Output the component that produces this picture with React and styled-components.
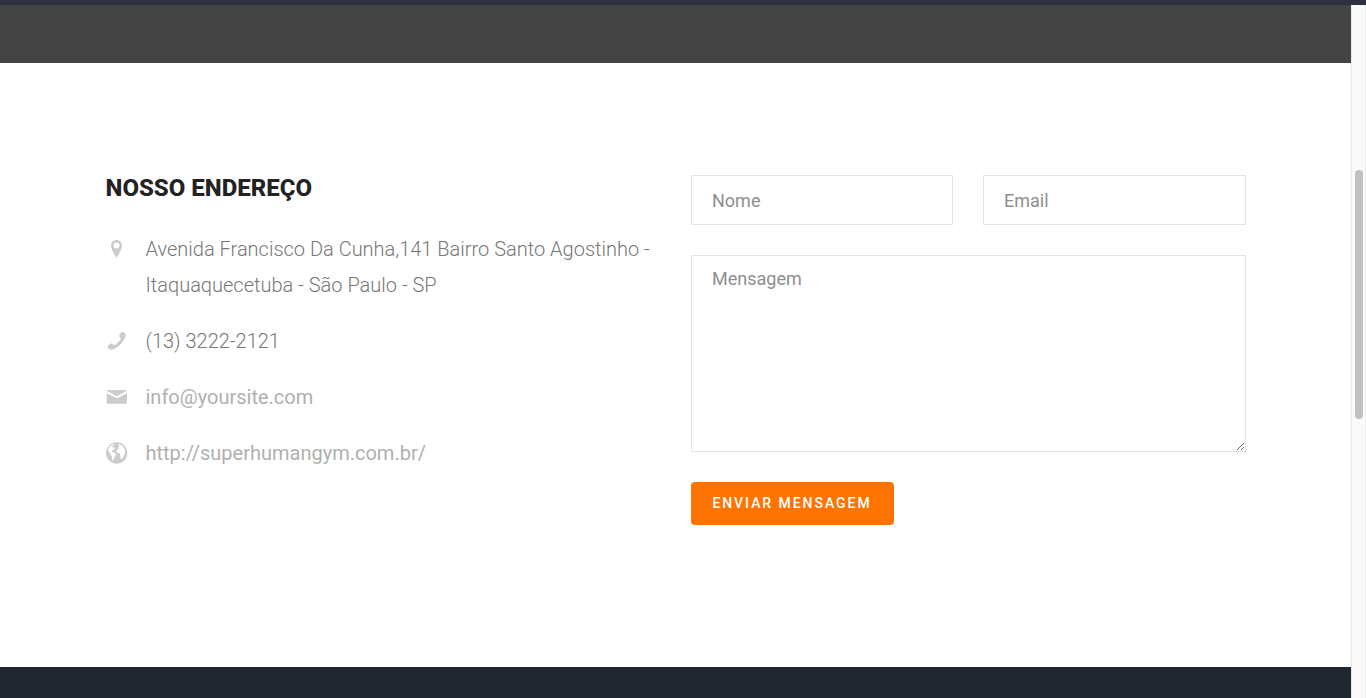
import React from "react";
import styled, { createGlobalStyle } from "styled-components";

const GlobalStyle = createGlobalStyle`
  * { box-sizing: border-box; }
  html, body { margin: 0; overflow: hidden; background: #fff; }
  body { font-family: Roboto, "Liberation Sans", sans-serif; -webkit-font-smoothing: antialiased; }
`;

const Page = styled.div`
  display: flex;
  flex-direction: column;
  height: 698px;
`;
const TopStrip = styled.div`
  flex: 0 0 5px;
  background: #2f3044;
`;
const Viewport = styled.div`
  flex: 1;
  min-height: 0;
  display: flex;
`;
const Content = styled.main`
  flex: 1;
  display: flex;
  flex-direction: column;
`;
const MapBand = styled.div`
  flex: 0 0 58px;
  background: #444;
`;
const Contact = styled.section`
  flex: 0 0 604px;
  display: grid;
  grid-template-columns: 555px 555px;
  column-gap: 30px;
  align-items: start;
  padding: 112px 0 0 106px;
`;
const Footer = styled.footer`
  flex: 1;
  background: #212731;
`;
const Track = styled.div`
  flex: 0 0 15px;
  padding: 165px 2px 0 3px;
  background: #fafafa;
  border-left: 1px solid #e8e8e8;
  border-right: 1px solid #ededed;
`;
const Thumb = styled.div`
  width: 8px;
  height: 249px;
  border-radius: 4px;
  background: #c1c1c1;
`;
const Title = styled.h2`
  margin: 0 0 30px -0.5px;
  padding-top: 1px;
  font-size: 24px;
  line-height: 25px;
  font-weight: 800;
  color: #222;
`;
const List = styled.ul`
  display: flex;
  flex-direction: column;
  gap: 20px;
  margin: 0;
  padding: 0;
  list-style: none;
`;
const Item = styled.li`
  display: grid;
  grid-template-columns: 22px 1fr;
  column-gap: 17.5px;
  font-size: 20px;
  line-height: 36px;
  font-weight: 300;
  color: #777;
`;
const Icon = styled.svg`
  width: 22px;
  height: 36px;
  fill: #ccc;
`;
const Link = styled.a`
  font-weight: 400;
  color: #b0b0b0;
  text-decoration: none;
`;
const Form = styled.form`
  display: grid;
  grid-template-columns: 262px 263px;
  gap: 30px;
  justify-items: start;
`;
const Input = styled.input`
  width: 100%;
  height: 50px;
  padding: 1px 20px 0;
  border: 1px solid #e5e5e5;
  border-radius: 0;
  outline: 0;
  font: 400 18px Roboto, sans-serif;
  &::placeholder { color: #8e8e8e; opacity: 1; }
`;
const Message = styled.textarea`
  grid-column: 1 / -1;
  display: block;
  width: 100%;
  height: 197px;
  padding: 12px 20px;
  border: 1px solid #e5e5e5;
  outline: 0;
  font: 400 18px Roboto, sans-serif;
  &::placeholder { color: #8e8e8e; opacity: 1; }
`;
const Button = styled.button`
  width: 203px;
  height: 43px;
  padding: 0 1px 1px 0;
  border: 0;
  border-radius: 4px;
  background: #ff7400;
  color: #fff;
  font: 500 14px Roboto, sans-serif;
  letter-spacing: 1.95px;
  white-space: nowrap;
`;

const Pin = () => (
  <Icon viewBox="0 0 22 36">
    <path fillRule="evenodd" d="M10.5 9C7.4 9 5 11.4 5 14.5c0 4.300 5.500 12.500 5.500 12.500S16 18.800 16 14.500C16 11.400 13.600 9 10.500 9zm0 8.500a3 3 0 1 1 0-6 3 3 0 0 1 0 6z" />
  </Icon>
);
const Phone = () => (
  <Icon viewBox="0 0 22 36">
    <path d="M14.200 20.200c-2 2-4.300 3.900-5.200 3-1.300-1.300-2.100-2.400-4.900-.1-2.800 2.200-.7 3.700.5 4.900 1.400 1.400 6.600.1 11.700-5.100 5.100-5.100 6.400-10.300 5-11.700-1.200-1.200-2.600-3.300-4.900-.5-2.200 2.800-1.100 3.600.1 4.900.9.900-.3 2.600-2.300 4.600z" transform="translate(-.8 .2) scale(.93)" />
  </Icon>
);
const Mail = () => (
  <Icon viewBox="0 0 22 36">
    <path d="M1.600 12.300l8.100 4.500c.5.300.8.300 1.100.3s.6 0 1.100-.3l8.100-4.500c.6-.4 1.100-1.300.2-1.300H1.400c-.9 0-.4.900.2 1.300zM20.300 14.400l-8.300 4.300c-.4.200-.8.300-1.200.3s-.8-.1-1.200-.3l-8.300-4.300c-.6-.3-.6 0-.6.400V23.500c0 .5.600 1.300 1.200 1.300h17.900c.6 0 1.200-.8 1.200-1.300V14.800c0-.4-.1-.7-.7-.4z" />
  </Icon>
);
const Globe = () => (
  <Icon viewBox="0 0 22 36">
    <circle cx="10.600" cy="18" r="10.700" />
    <path fill="#fff" d="M2.300 14.200C3 12 4.700 10.300 6.800 9.300l1.700-.4-.7 1.200-1.900 1.500.4.900 1.800-.5.900 1.100-1.400 1.600-1.800.9.200 1.100 2.200.8 1.700 1.500-.4 1.900-1.200 1.200-.5 2.300-.9 1.300-.9-1.400-.2-3.300-1.600-1.800-.4-2-1.600-1.300z" />
    <path fill="#fff" d="M12.600 9c2.600.6 4.900 2.400 6 4.900l.7 2.600-.3 2.200-1 .7-.5 2.300-1.600 2.300-1.300-.4-.5-2.400.2-1.700-1-1.200-1.900-.2-1-1.700.8-2 1.600-.7-.6-1.400 1-.9-.8-1.100z" />
  </Icon>
);

export default function App() {
  return (
    <>
      <GlobalStyle />
      <Page>
        <TopStrip />
        <Viewport>
          <Content>
            <MapBand />
            <Contact>
              <div>
                <Title>NOSSO ENDEREÇO</Title>
                <List>
                  <Item>
                    <Pin />
                    <span>Avenida Francisco Da Cunha,141 Bairro Santo Agostinho -<br />Itaquaquecetuba - São Paulo - SP</span>
                  </Item>
                  <Item><Phone /><span>(13) 3222-2121</span></Item>
                  <Item><Mail /><Link>info@yoursite.com</Link></Item>
                  <Item><Globe /><Link>http://superhumangym.com.br/</Link></Item>
                </List>
              </div>
              <Form>
                <Input placeholder="Nome" />
                <Input placeholder="Email" />
                <Message placeholder="Mensagem" />
                <Button type="button">ENVIAR MENSAGEM</Button>
              </Form>
            </Contact>
            <Footer />
          </Content>
          <Track><Thumb /></Track>
        </Viewport>
      </Page>
    </>
  );
}
